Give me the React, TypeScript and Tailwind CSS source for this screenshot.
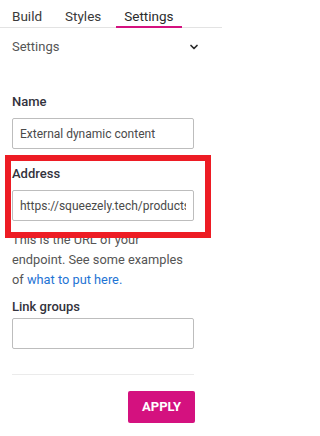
import { ChevronDown } from "lucide-react";

const tabs = ["Build", "Styles", "Settings"];

function Field({ label, value, labelGap = "mb-[8px]" }: { label: string; value?: string; labelGap?: string }) {
  return (
    <div className="flex flex-col">
      <label className={`${labelGap} text-[13px] leading-[16px] font-medium text-[#33333d]`}>{label}</label>
      <input
        readOnly
        value={value ?? ""}
        className="h-[31px] w-[182px] rounded-[2px] border border-[#bdbdbd] bg-white px-[7px] text-[12px] text-[#4a4a4a] outline-none"
      />
    </div>
  );
}

export default function App() {
  return (
    <div className="relative h-[436px] w-[222px] overflow-hidden bg-white font-['Roboto',sans-serif]">
      <div className="flex gap-[7px] border-b border-[#e3e3e3] pl-[4px]">
        {tabs.map((t) => (
          <div
            key={t}
            className={
              t === "Settings"
                ? "-mb-px border-b-2 border-[#d4117f] px-[8px] pt-[8px] pb-[2px] text-[13.5px] leading-[16px] text-[#2b2b2b]"
                : "px-[8px] pt-[8px] pb-[3px] text-[13.5px] leading-[16px] text-[#3a3a3a]"
            }
          >
            {t}
          </div>
        ))}
      </div>

      <div className="flex h-[38px] items-center justify-between pl-[12px] pr-[22px] text-[13px] text-[#555]">
        <span>Settings</span>
        <ChevronDown size={12} strokeWidth={3.5} className="text-[#2b2b2b]" />
      </div>

      <div className="flex flex-col px-[12px] pt-[28px]">
        <Field label="Name" value="External dynamic content" />
        <div className="mt-[17px]">
          <Field label="Address" value="https://squeezely.tech/products" />
        </div>
        <p className="mt-[9px] w-[180px] text-[12.8px] leading-[20px] text-[#555]">
          This is the URL of your endpoint. See some examples of{" "}
          <a className="text-[#1f74d4]">what to put here.</a>
        </p>
        <div className="mt-[9px]">
          <Field label="Link groups" labelGap="mb-[3px]" />
        </div>
        <div className="mt-[25px] h-px w-[182px] bg-[#ebebeb]" />
        <div className="mt-[16px] flex w-[183px] justify-end">
          <button className="h-[32px] w-[67px] rounded-[2px] bg-[#d4117f] text-[13px] font-bold text-white">
            APPLY
          </button>
        </div>
      </div>

      <div className="pointer-events-none absolute left-[5px] top-[155px] h-[83px] w-[206px] border-[6px] border-[#ed1c24]" />
    </div>
  );
}
